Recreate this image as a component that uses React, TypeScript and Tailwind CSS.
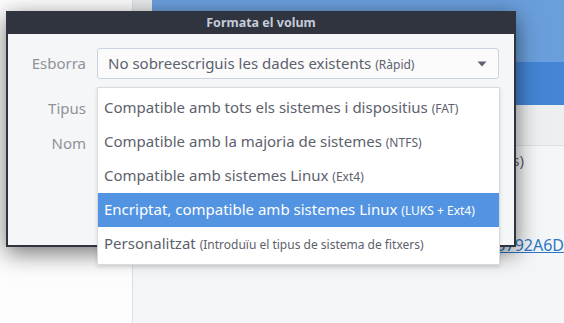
import React from "react";

const items: { main: string; sub: string; selected?: boolean }[] = [
  { main: "Compatible amb tots els sistemes i dispositius", sub: "(FAT)" },
  { main: "Compatible amb la majoria de sistemes", sub: "(NTFS)" },
  { main: "Compatible amb sistemes Linux", sub: "(Ext4)" },
  { main: "Encriptat, compatible amb sistemes Linux", sub: "(LUKS + Ext4)", selected: true },
  { main: "Personalitzat", sub: "(Introduïu el tipus de sistema de fitxers)" },
];

export default function App() {
  return (
    <div className="relative w-[564px] h-[323px] overflow-hidden flex font-['Noto_Sans',sans-serif] text-[#5c616c]">
      {/* background: sidebar */}
      <div className="w-[133px] shrink-0 bg-[#fdfdfd] border-r border-[#dcdfe3]" />
      {/* background: main pane */}
      <div className="flex-1 bg-[#f5f6f7] flex flex-col">
        <div className="h-[105px] pl-[19px] bg-[#e9eaec] flex flex-col">
          <div className="h-[62px] bg-[#6a9fdc]" />
          <div className="h-[43px] bg-[#4485d5]" />
        </div>
        <div className="h-[41px] bg-[#eeeff1] border-b border-[#dcdfe3]" />
        <div className="mt-[4px] h-[20px] leading-[20px] text-[15px] text-right pr-[40px] whitespace-nowrap">
          Sistemes)
        </div>
        <div className="mt-[65px] h-[20px] leading-[20px] text-[16px] text-right whitespace-nowrap">
          <span className="text-[#2a76c6] underline">F3792A6D</span>
        </div>
      </div>

      {/* dialog */}
      <div className="absolute left-[6px] top-[11px] w-[510px] h-[236px] border-2 border-[#2f343f] bg-[#f5f6f7] flex flex-col shadow-[0_6px_22px_rgba(0,0,0,0.55)]">
        <div className="h-[21px] bg-[#2f343f] flex items-center justify-center text-[12.5px] font-bold text-[#c4ccd8]">
          Formata el volum
        </div>
        <div className="flex pt-[14px]">
          <div className="w-[78px] flex flex-col items-end text-[15px] text-[#8e929b]">
            <div className="h-[31px] flex items-center">Esborra</div>
            <div className="h-[32px] mt-[13px] flex items-center">Tipus</div>
            <div className="h-[32px] mt-[3px] flex items-center">Nom</div>
          </div>
          <div className="ml-[11px] w-[402px]">
            <div className="h-[31px] rounded-[3px] border border-[#cbd2e3] bg-[#fbfbfc] flex items-center pl-[10px] pr-[11px] whitespace-nowrap">
              <span className="text-[15px] leading-[20px]">
                No sobreescriguis les dades existents{" "}
                <span className="text-[12px]">(Ràpid)</span>
              </span>
              <svg className="ml-auto" width="10" height="6" viewBox="0 0 10 6">
                <path d="M0.5 0.5 L9.5 0.5 L5 5.5 Z" fill="#5c616c" />
              </svg>
            </div>
          </div>
        </div>
      </div>

      {/* dropdown menu */}
      <div className="absolute left-[97px] top-[87px] w-[403px] h-[178px] bg-white border border-[#d9dadd] shadow-[0_2px_4px_rgba(0,0,0,0.12)] py-[3px] flex flex-col">
        {items.map((it) => (
          <div
            key={it.main}
            className={
              "h-[34px] shrink-0 flex items-center pl-[6px] whitespace-nowrap " +
              (it.selected ? "bg-[#5294e2] text-white" : "")
            }
          >
            <span className="text-[15px] leading-[20px]">
              {it.main} <span className="text-[12px]">{it.sub}</span>
            </span>
          </div>
        ))}
      </div>
    </div>
  );
}
